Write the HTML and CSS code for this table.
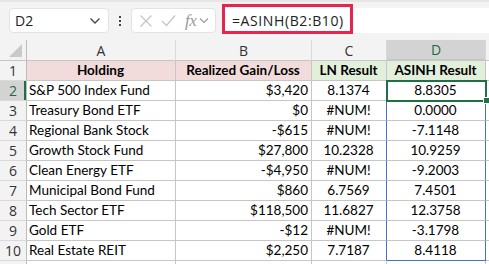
FILE: index.html
```html
<!DOCTYPE html>
<html>
<head>
<meta charset="utf-8">
<link rel="stylesheet" href="styles.css">
</head>
<body>
<div class="toolbar">
  <div class="namebox">
    <span class="name">D2</span>
    <svg class="chev" width="12" height="8" viewBox="0 0 12 8"><path d="M1.5 1.5 L6 6 L10.5 1.5" fill="none" stroke="#444" stroke-width="1.3"/></svg>
  </div>
  <div class="dots"><i></i><i></i><i></i></div>
  <div class="fxbox">
    <svg width="14" height="14" viewBox="0 0 14 14"><path d="M1.5 1.5 L12.5 12.5 M12.5 1.5 L1.5 12.5" stroke="#c4c4c4" stroke-width="1.2" fill="none"/></svg>
    <svg width="15" height="13" viewBox="0 0 15 13"><path d="M1 7 L5.5 11.5 L14 1.5" stroke="#c4c4c4" stroke-width="1.2" fill="none"/></svg>
    <span class="fx">fx</span>
    <svg width="10" height="7" viewBox="0 0 10 7"><path d="M1 1.5 L5 5.5 L9 1.5" fill="none" stroke="#9a9a9a" stroke-width="1.2"/></svg>
  </div>
  <div class="formula">
    <span class="ftext">=ASINH(B2:B10)</span>
    <div class="callout"></div>
  </div>
</div>
<table class="sheet">
  <colgroup><col class="c0"><col class="ca"><col class="cb"><col class="cc"><col class="cd"><col class="ce"></colgroup>
  <tr class="hdr"><th class="corner"><span class="tri"></span></th><th>A</th><th>B</th><th>C</th><th class="sel">D</th><th></th></tr>
  <tr><th>1</th><td class="h pink">Holding</td><td class="h pink">Realized Gain/Loss</td><td class="h green">LN Result</td><td class="h green">ASINH Result</td><td></td></tr>
  <tr><th class="rsel">2</th><td>S&amp;P 500 Index Fund</td><td class="r">$3,420</td><td class="c">8.1374</td><td class="c active">8.8305</td><td></td></tr>
  <tr><th>3</th><td>Treasury Bond ETF</td><td class="r">$0</td><td class="c sp">#NUM!</td><td class="c sp">0.0000</td><td></td></tr>
  <tr><th>4</th><td>Regional Bank Stock</td><td class="r">-$615</td><td class="c sp">#NUM!</td><td class="c sp">-7.1148</td><td></td></tr>
  <tr><th>5</th><td>Growth Stock Fund</td><td class="r">$27,800</td><td class="c sp">10.2328</td><td class="c sp">10.9259</td><td></td></tr>
  <tr><th>6</th><td>Clean Energy ETF</td><td class="r">-$4,950</td><td class="c sp">#NUM!</td><td class="c sp">-9.2003</td><td></td></tr>
  <tr><th>7</th><td>Municipal Bond Fund</td><td class="r">$860</td><td class="c sp">6.7569</td><td class="c sp">7.4501</td><td></td></tr>
  <tr><th>8</th><td>Tech Sector ETF</td><td class="r">$118,500</td><td class="c sp">11.6827</td><td class="c sp">12.3758</td><td></td></tr>
  <tr><th>9</th><td>Gold ETF</td><td class="r">-$12</td><td class="c sp">#NUM!</td><td class="c sp">-3.1798</td><td></td></tr>
  <tr><th>10</th><td>Real Estate REIT</td><td class="r">$2,250</td><td class="c sp">7.7187</td><td class="c sp last">8.4118</td><td></td></tr>
  <tr><th></th><td></td><td></td><td></td><td></td><td></td></tr>
</table>
</body>
</html>
```
FILE: styles.css
```css
html, body { margin: 0; padding: 0; background: #fff; overflow: hidden; }
body { width: 489px; height: 264px; font-family: "Lato", "Liberation Sans", sans-serif; }

.toolbar {
  height: 40px;
  background: #f3f3f3;
  border-top: 2px solid #e6e6e6;
  box-sizing: border-box;
  display: flex;
  align-items: flex-start;
  padding-top: 6px;
  position: relative;
}
.namebox {
  margin-left: 9px;
  width: 100px;
  height: 25px;
  box-sizing: border-box;
  background: #fff;
  border: 1px solid #e3e3e3;
  border-radius: 4px;
  display: flex;
  align-items: center;
  justify-content: space-between;
  padding: 0 7px 0 5px;
}
.name { font-family: "Open Sans", sans-serif; font-size: 14px; color: #222; }
.dots { width: 22px; height: 25px; display: flex; flex-direction: column; align-items: center; justify-content: center; gap: 2px; }
.dots i { display: block; width: 2px; height: 2px; background: #444; }
.fxbox {
  width: 85px;
  height: 25px;
  box-sizing: border-box;
  background: #fff;
  border: 1px solid #e3e3e3;
  border-radius: 4px;
  display: flex;
  align-items: center;
  gap: 8px;
  padding-left: 7px;
}
.fx { font-family: "Liberation Serif", serif; font-style: italic; font-size: 17px; color: #9a9a9a; margin-left: 1px; margin-right: -5px; letter-spacing: -0.5px; }
.formula {
  margin-left: 6px;
  flex: 1;
  height: 25px;
  background: #fff;
  display: flex;
  align-items: center;
  position: relative;
}
.ftext { font-family: "Open Sans", sans-serif; font-size: 14px; color: #222; padding-left: 10px; letter-spacing: 0.6px; }
.callout {
  position: absolute;
  left: 0;
  top: -4px;
  width: 131px;
  height: 30px;
  box-sizing: border-box;
  border: 3px solid #e5254e;
}

.sheet {
  border-collapse: separate;
  border-spacing: 0;
  table-layout: fixed;
  width: 490px;
}
.c0 { width: 27px; }
.ca { width: 149px; }
.cb { width: 136px; }
.cc { width: 75px; }
.cd { width: 99px; }
.ce { width: 4px; }

.sheet th, .sheet td {
  height: 19px;
  padding: 0 3px 0 2px;
  border-right: 1px solid #c6c6c6;
  border-bottom: 1px solid #c6c6c6;
  font-size: 13.5px;
  line-height: 19px;
  white-space: nowrap;
  overflow: hidden;
  color: #000;
  box-sizing: content-box;
}
.sheet th {
  background: #f3f3f3;
  font-family: "Open Sans", sans-serif;
  font-weight: normal;
  font-size: 14px;
  color: #333;
  text-align: center;
  border-right-color: #d9d9d9;
  border-bottom-color: #d9d9d9;
  padding: 0;
}
.sheet tr.hdr th { border-bottom-color: #c6c6c6; }
.sheet tr th:first-child { border-right-color: #bcbcbc; }
.corner { position: relative; }
.tri {
  position: absolute;
  right: 4px;
  bottom: 3px;
  width: 0; height: 0;
  border-left: 13px solid transparent;
  border-bottom: 13px solid #c9c9c9;
}
.sheet th.sel {
  background: #d3d3d3;
  color: #1e6b41;
  border-bottom: 2px solid #1e7145;
  height: 18px;
}
.sheet th.rsel {
  background: #d3d3d3;
  color: #1e6b41;
  box-shadow: inset -2px 0 0 #1e7145;
}

.h { font-weight: bold; text-align: center; }
.pink { background: #f2dcdb; }
.green { background: #e2efda; }
.r { text-align: right; }
.c { text-align: center; }
td.c.sp { border-right-color: #4472c4; }
td.c.sp.last { border-bottom-color: #4472c4; }
.active { position: relative; overflow: visible !important; }
.active::before {
  content: "";
  position: absolute;
  left: -1px; top: -1px; right: -2px; bottom: -2px;
  border: 2px solid #1e7145;
}
.active::after {
  content: "";
  position: absolute;
  right: -5px; bottom: -4px;
  width: 5px; height: 5px;
  background: #1e7145;
  border: 1px solid #fff;
}
```
